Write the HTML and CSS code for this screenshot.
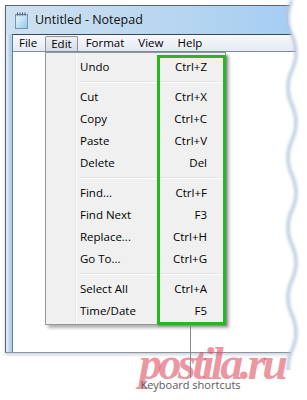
FILE: index.html
```html
<!DOCTYPE html>
<html>
<head>
<meta charset="utf-8">
<link rel="stylesheet" href="styles.css">
</head>
<body>
<div class="stage">
  <div class="window">
    <div class="titlebar">
      <svg class="app-icon" width="13" height="17" viewBox="0 0 13 17">
        <defs>
          <linearGradient id="pg" x1="0" y1="0" x2="1" y2="1">
            <stop offset="0" stop-color="#f2fafe"/>
            <stop offset="1" stop-color="#8cc6ea"/>
          </linearGradient>
        </defs>
        <rect x="0.5" y="2.5" width="12" height="14" fill="url(#pg)" stroke="#6f97b8"/>
        <rect x="1" y="3" width="11" height="1.5" fill="#b9d3e6"/>
        <g fill="#4a5a6a">
          <rect x="2" y="0.5" width="1" height="3"/>
          <rect x="4.5" y="0.5" width="1" height="3"/>
          <rect x="7" y="0.5" width="1" height="3"/>
          <rect x="9.5" y="0.5" width="1" height="3"/>
        </g>
      </svg>
      <span class="title">Untitled - Notepad</span>
    </div>
    <div class="body">
      <div class="client">
        <div class="menubar">
          <span class="mitem">File</span>
          <span class="mitem open">Edit</span>
          <span class="mitem">Format</span>
          <span class="mitem">View</span>
          <span class="mitem">Help</span>
        </div>
        <div class="content"></div>
      </div>
    </div>
  </div>

  <div class="dropdown">
    <div class="row"><span>Undo</span><span>Ctrl+Z</span></div>
    <div class="sep"></div>
    <div class="row"><span>Cut</span><span>Ctrl+X</span></div>
    <div class="row"><span>Copy</span><span>Ctrl+C</span></div>
    <div class="row"><span>Paste</span><span>Ctrl+V</span></div>
    <div class="row"><span>Delete</span><span>Del</span></div>
    <div class="sep"></div>
    <div class="row"><span>Find...</span><span>Ctrl+F</span></div>
    <div class="row"><span>Find Next</span><span>F3</span></div>
    <div class="row"><span>Replace...</span><span>Ctrl+H</span></div>
    <div class="row"><span>Go To...</span><span>Ctrl+G</span></div>
    <div class="sep"></div>
    <div class="row"><span>Select All</span><span>Ctrl+A</span></div>
    <div class="row"><span>Time/Date</span><span>F5</span></div>
  </div>

  <div class="highlight"></div>

  <svg class="torn" width="27" height="370" viewBox="0 0 27 370">
    <defs>
      <filter id="blur" x="-50%" y="-5%" width="200%" height="110%">
        <feGaussianBlur stdDeviation="1.4"/>
      </filter>
    </defs>
    <path d="M 12 0 Q 4 17.5 12 35 T 12 70 T 12 105 T 12 140 T 12 175 T 12 210 T 12 245 T 12 280 T 12 315 T 12 350 T 12 385 L 27 385 L 27 0 Z" fill="#ffffff"/>
    <path d="M 12 0 Q 4 17.5 12 35 T 12 70 T 12 105 T 12 140 T 12 175 T 12 210 T 12 245 T 12 280 T 12 315 T 12 350 T 12 385" fill="none" stroke="#b4c6dc" stroke-width="3.5" filter="url(#blur)" opacity="0.85"/>
  </svg>

  <div class="watermark">postila.ru</div>

  <div class="callout">
    <div class="callout-line"></div>
    <div class="callout-label">Keyboard shortcuts</div>
  </div>
</div>
</body>
</html>
```

FILE: styles.css
```css
html, body {
  margin: 0;
  padding: 0;
  background: #ffffff;
}

.stage {
  position: relative;
  width: 307px;
  height: 400px;
  overflow: hidden;
  font-family: "Open Sans", "Noto Sans", sans-serif;
  font-size: 11.5px;
  color: #000;
}

.window {
  margin: 5px 0 0 5px;
  width: 296px;
  height: 348px;
  box-sizing: border-box;
  border-top: 1px solid #5a6676;
  border-left: 1px solid #5a6676;
  border-bottom: 1px solid #8a94a2;
  background: linear-gradient(to right, #c9dcec, #b3d3ef);
  display: flex;
  flex-direction: column;
  box-shadow: 0 2px 3px rgba(120, 130, 150, 0.35);
}

.titlebar {
  height: 28px;
  display: flex;
  align-items: center;
  padding-left: 9px;
  gap: 7px;
  background: linear-gradient(to right, #d0e1ef 0%, #bcd8f0 45%, #a4cdf2 100%);
}

.app-icon {
  display: block;
  margin-top: 1px;
}

.title {
  font-size: 12.5px;
  color: #111;
  line-height: 16px;
}

.body {
  flex: 1;
  display: flex;
  padding-left: 6px;
  background: linear-gradient(to right, #dfe6ee 0px, #dfe6ee 2px, #b7d5f0 3px, #a9cff0 6px);
}

.client {
  flex: 1;
  display: flex;
  flex-direction: column;
  border-left: 1px solid #6d7d90;
  border-top: 1px solid #39475a;
  background: #ffffff;
}

.menubar {
  height: 16px;
  display: flex;
  align-items: flex-end;
  gap: 2px;
  padding-left: 0;
  background: linear-gradient(#f8f8fc, #e4e9f3);
  border-bottom: 1px solid #7d8ba0;
}

.mitem {
  height: 15px;
  line-height: 14px;
  padding: 0 6px;
  box-sizing: border-box;
}

.mitem.open {
  border: 1px solid #8c939c;
  border-bottom: none;
  border-radius: 2px 2px 0 0;
  padding: 0 5px;
  background: linear-gradient(#eef1f5, #d6dce4);
}

.content {
  flex: 1;
  background: #ffffff;
}

.dropdown {
  position: absolute;
  left: 45px;
  top: 52px;
  width: 181px;
  height: 273px;
  box-sizing: border-box;
  border: 1px solid #979797;
  padding: 3px 2px;
  background: linear-gradient(to right, #f0f0f0 29px, #e2e3e3 29px, #e2e3e3 30px, #ffffff 30px, #ffffff 31px, #f0f0f0 31px);
  box-shadow: 3px 3px 3px rgba(0, 0, 0, 0.3);
}

.row {
  height: 22px;
  display: flex;
  align-items: center;
  justify-content: space-between;
  padding: 0 16px 0 32px;
  line-height: 14px;
}

.sep {
  height: 8px;
  margin-left: 31px;
  box-sizing: border-box;
  padding-top: 3px;
}

.sep::before {
  content: "";
  display: block;
  height: 1px;
  background: #e2e3e3;
  border-bottom: 1px solid #ffffff;
}

.highlight {
  position: absolute;
  left: 157px;
  top: 55px;
  width: 69px;
  height: 270px;
  box-sizing: border-box;
  border: 3px solid #24b824;
  box-shadow: 1px 1px 2px rgba(0, 0, 0, 0.3);
}

.torn {
  position: absolute;
  left: 280px;
  top: 0;
  display: block;
}

.watermark {
  position: absolute;
  left: 139px;
  top: 338px;
  font-family: "Liberation Serif", serif;
  font-style: italic;
  font-weight: bold;
  font-size: 46px;
  letter-spacing: -3.5px;
  line-height: 52px;
  color: rgba(222, 80, 100, 0.6);
  white-space: nowrap;
}

.callout {
  position: absolute;
  left: 90px;
  top: 325px;
  width: 201px;
  display: flex;
  flex-direction: column;
  align-items: center;
}

.callout-line {
  width: 1px;
  height: 53px;
  background: #8a8a8a;
}

.callout-label {
  font-size: 11px;
  line-height: 13px;
  color: #5a5a5a;
  white-space: nowrap;
}
```
